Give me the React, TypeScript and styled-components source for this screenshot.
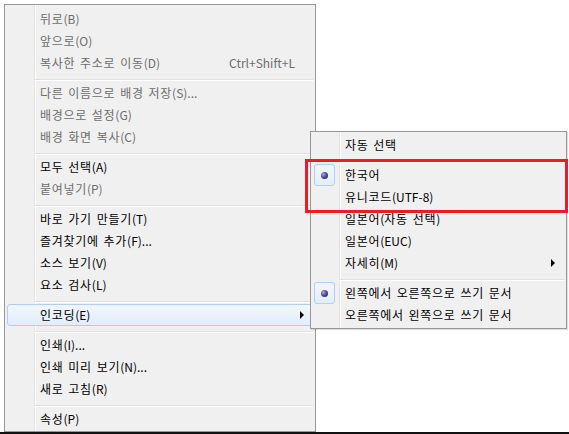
import React from "react";
import styled, { createGlobalStyle, css } from "styled-components";

const GlobalStyle = createGlobalStyle`
  html, body { margin: 0; padding: 0; background: #ffffff; }
  body {
    font-family: "Noto Sans CJK KR", "Noto Sans", "Liberation Sans", sans-serif;
    font-size: 12px;
  }
`;

const Page = styled.div`
  position: relative;
  width: 569px;
  height: 434px;
  overflow: hidden;
  background: #fff;
  display: flex;
  flex-direction: column;
`;

const Desk = styled.div`
  flex: 1;
  padding: 4px 0 0 4px;
`;

const Taskbar = styled.div`
  height: 2px;
  background: #111;
`;

const Menu = styled.div<{ $gutter: number }>`
  box-sizing: border-box;
  border: 1px solid #979797;
  background:
    linear-gradient(
      to right,
      transparent ${(p) => p.$gutter}px,
      #e2e3e3 ${(p) => p.$gutter}px,
      #e2e3e3 ${(p) => p.$gutter + 1}px,
      #ffffff ${(p) => p.$gutter + 1}px,
      #ffffff ${(p) => p.$gutter + 2}px,
      transparent ${(p) => p.$gutter + 2}px
    ),
    #f0f0f0;
  display: flex;
  flex-direction: column;
`;

const MainMenu = styled(Menu)`
  width: 312px;
  padding: 3px 2px 1px 2px;
`;

const SubMenu = styled(Menu)`
  position: absolute;
  left: 310px;
  top: 131px;
  width: 257px;
  padding: 2px;
  box-shadow: 1px 1px 1px rgba(0, 0, 0, 0.12);
`;

const Item = styled.div<{ $disabled?: boolean; $hot?: boolean; $indent: number }>`
  box-sizing: border-box;
  height: 22px;
  display: flex;
  align-items: center;
  position: relative;
  padding-left: ${(p) => p.$indent}px;
  padding-right: 8px;
  border: 1px solid transparent;
  border-radius: 3px;
  color: ${(p) => (p.$disabled ? "#6d6d6d" : "#000")};
  white-space: nowrap;
  line-height: 20px;
  ${(p) =>
    p.$hot &&
    css`
      border-color: #aecff7;
      background: linear-gradient(to bottom, #f2f7fe, #e2ecfb);
    `}
`;

const Label = styled.span`
  flex: 1;
  margin-top: -1px;
`;

const Hangul = styled.span`
  letter-spacing: 0.7px;
  word-spacing: 1.5px;
`;

const Shortcut = styled.span`
  margin-right: 9px;
  margin-top: -1px;
`;

const Arrow = styled.span`
  width: 0;
  height: 0;
  border-left: 4px solid #000;
  border-top: 4px solid transparent;
  border-bottom: 4px solid transparent;
`;

const Separator = styled.div<{ $indent: number }>`
  margin: 5px 0 1px ${(p) => p.$indent}px;
  border-top: 1px solid #e0e0e0;
  border-bottom: 1px solid #ffffff;
`;

const RadioBox = styled.span`
  position: absolute;
  left: 0;
  top: -1px;
  box-sizing: border-box;
  width: 21px;
  height: 22px;
  border: 1px solid #aecff7;
  border-radius: 3px;
  background: linear-gradient(to bottom, #f1f6fd, #e3edfb);
  display: flex;
  align-items: center;
  justify-content: center;
`;

const Dot = styled.span`
  width: 7px;
  height: 7px;
  border-radius: 50%;
  background: radial-gradient(circle at 35% 35%, #a9a9e0 0%, #4d4d9a 45%, #1d1d5e 100%);
`;

const Annotation = styled.div`
  position: absolute;
  left: 305px;
  top: 159px;
  width: 263px;
  height: 54px;
  box-sizing: border-box;
  border: 3px solid #ed1c24;
  pointer-events: none;
`;

type Entry =
  | { sep: true }
  | {
      sep?: false;
      label: string;
      disabled?: boolean;
      shortcut?: string;
      sub?: boolean;
      hot?: boolean;
      radio?: boolean;
    };

const mainEntries: Entry[] = [
  { label: "뒤로(B)", disabled: true },
  { label: "앞으로(O)", disabled: true },
  { label: "복사한 주소로 이동(D)", disabled: true, shortcut: "Ctrl+Shift+L" },
  { sep: true },
  { label: "다른 이름으로 배경 저장(S)...", disabled: true },
  { label: "배경으로 설정(G)", disabled: true },
  { label: "배경 화면 복사(C)", disabled: true },
  { sep: true },
  { label: "모두 선택(A)" },
  { label: "붙여넣기(P)", disabled: true },
  { sep: true },
  { label: "바로 가기 만들기(T)" },
  { label: "즐겨찾기에 추가(F)..." },
  { label: "소스 보기(V)" },
  { label: "요소 검사(L)" },
  { sep: true },
  { label: "인코딩(E)", sub: true, hot: true },
  { sep: true },
  { label: "인쇄(I)..." },
  { label: "인쇄 미리 보기(N)..." },
  { label: "새로 고침(R)" },
  { sep: true },
  { label: "속성(P)" },
];

const subEntries: Entry[] = [
  { label: "자동 선택" },
  { sep: true },
  { label: "한국어", radio: true },
  { label: "유니코드(UTF-8)" },
  { label: "일본어(자동 선택)" },
  { label: "일본어(EUC)" },
  { label: "자세히(M)", sub: true },
  { sep: true },
  { label: "왼쪽에서 오른쪽으로 쓰기 문서", radio: true },
  { label: "오른쪽에서 왼쪽으로 쓰기 문서" },
];

function runs(text: string) {
  return text
    .split(/([\uac00-\ud7a3 ]+)/)
    .filter((s) => s.length > 0)
    .map((s, i) =>
      /[\uac00-\ud7a3]/.test(s) ? <Hangul key={i}>{s}</Hangul> : <React.Fragment key={i}>{s}</React.Fragment>
    );
}

function renderEntries(entries: Entry[], indent: number, sepIndent: number) {
  return entries.map((e, i) => {
    if (e.sep) return <Separator key={i} $indent={sepIndent} />;
    return (
      <Item key={i} $indent={indent} $disabled={e.disabled} $hot={e.hot}>
        {e.radio && (
          <RadioBox>
            <Dot />
          </RadioBox>
        )}
        <Label>{runs(e.label)}</Label>
        {e.shortcut && <Shortcut>{e.shortcut}</Shortcut>}
        {e.sub && <Arrow />}
      </Item>
    );
  });
}

export default function App() {
  return (
    <>
      <GlobalStyle />
      <Page>
        <Desk>
          <MainMenu $gutter={29}>{renderEntries(mainEntries, 32, 27)}</MainMenu>
        </Desk>
        <Taskbar />
        <SubMenu $gutter={28}>{renderEntries(subEntries, 31, 26)}</SubMenu>
        <Annotation />
      </Page>
    </>
  );
}
